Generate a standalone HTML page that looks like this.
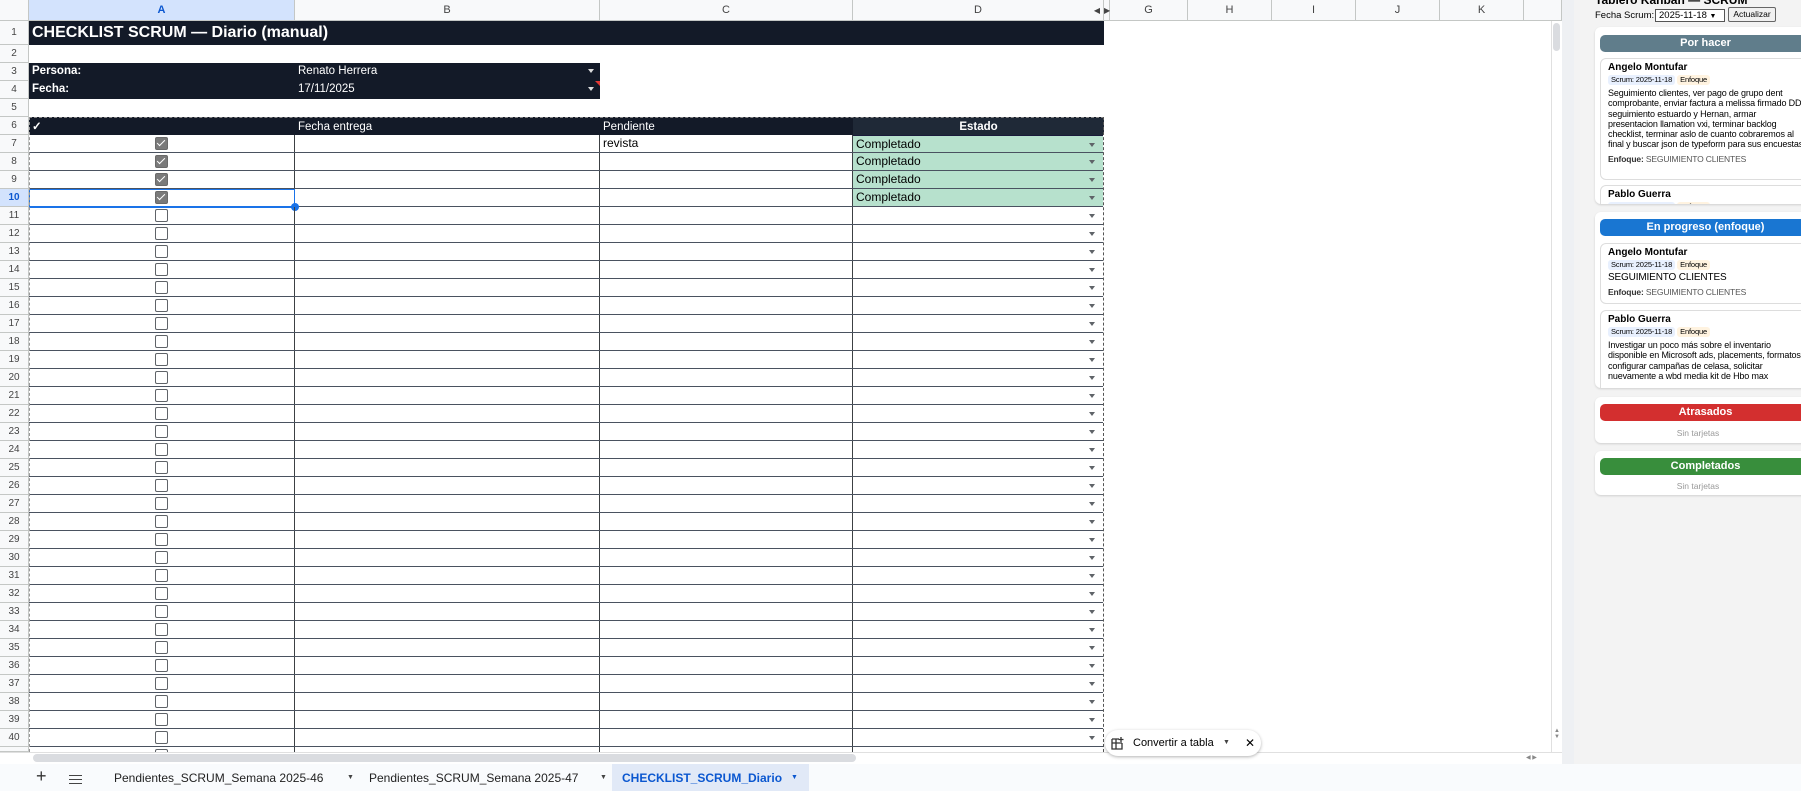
<!DOCTYPE html>
<html><head><meta charset="utf-8">
<style>
*{box-sizing:border-box;margin:0;padding:0}
body{width:1801px;height:791px;overflow:hidden;position:relative;background:#fff;font-family:"Liberation Sans",Arial,sans-serif;color:#000}
.a{position:absolute}
.ch{position:absolute;top:0;height:21px;background:#f8f9fa;border-right:1px solid #c4c7c5;border-bottom:1px solid #c4c7c5;font-size:11px;color:#444;text-align:center;line-height:21px}
.rn{position:absolute;left:0;width:29px;background:#f8f9fa;border-right:1px solid #c4c7c5;border-bottom:1px solid #c4c7c5;font-size:10px;color:#444;text-align:center}
.r{position:absolute;left:29px;width:1074px;height:18px;border-bottom:1px solid #4a5260}
.c{position:absolute;top:0;height:17px;font-size:12px;line-height:17px}
.vb{border-right:1px solid #3c4043}
.cb{position:absolute;left:126px;top:2px;width:13px;height:13px;border:1.5px solid #5f6368;border-radius:2px;background:#fff}
.cb.k{background:#7a7a7a;border-color:#6a6a6a}
.cb.k:after{content:"";position:absolute;left:3px;top:0px;width:3px;height:7px;border-right:1.6px solid #fff;border-bottom:1.6px solid #fff;transform:rotate(45deg)}
.dd{position:absolute;right:8px;top:7px;width:0;height:0;border-left:3px solid transparent;border-right:3px solid transparent;border-top:4px solid #5f6368}
.panel{position:absolute;left:1574px;top:0;width:227px;height:764px;background:#f3f3f3}
.box{position:absolute;left:1595px;width:216px;background:#fff;border-radius:6px;box-shadow:0 1px 2px rgba(0,0,0,.15);overflow:hidden}
.hd{position:absolute;left:5px;right:0;height:17px;border-radius:5px;color:#fff;font-weight:bold;font-size:11px;text-align:center;line-height:17px}
.card{position:absolute;left:5px;width:220px;border:1px solid #ddd;border-radius:6px;padding:3px 12px 0 7px;font-size:9px;line-height:10.3px;background:#fff;letter-spacing:-0.15px}
.nm{font-weight:bold;font-size:10px;line-height:12px;letter-spacing:0}
.chip{display:inline-block;font-size:7.5px;line-height:10px;padding:0 3px;border-radius:3px;margin:1px 2px 3px 0}
.c1{background:#e8f0fe}.c2{background:#fff3e0}
.ef{margin-top:4px;font-size:8.5px;color:#555}.ef b{color:#333}
.st{position:absolute;left:0;right:10px;text-align:center;font-size:8.5px;color:#999}
</style></head><body>

<div class="ch" style="left:0;width:29px;background:#f8f9fa"></div>
<div class="ch" style="left:29px;width:266px;background:#d3e3fd;font-weight:bold;color:#0b57d0">A</div>
<div class="ch" style="left:295px;width:305px">B</div>
<div class="ch" style="left:600px;width:253px">C</div>
<div class="ch" style="left:853px;width:251px">D<span style="position:absolute;right:3px;font-size:8px">◀</span></div>
<div class="ch" style="left:1104px;width:6px;font-size:8px;line-height:21px">▶</div>
<div class="ch" style="left:1110px;width:78px">G</div>
<div class="ch" style="left:1188px;width:84px">H</div>
<div class="ch" style="left:1272px;width:84px">I</div>
<div class="ch" style="left:1356px;width:84px">J</div>
<div class="ch" style="left:1440px;width:84px">K</div>
<div class="ch" style="left:1524px;width:38px"></div>

<div class="rn" style="top:21px;height:24px;line-height:24px">1</div>
<div class="rn" style="top:45px;height:18px;line-height:18px">2</div>
<div class="rn" style="top:63px;height:18px;line-height:18px">3</div>
<div class="rn" style="top:81px;height:18px;line-height:18px">4</div>
<div class="rn" style="top:99px;height:18px;line-height:18px">5</div>
<div class="rn" style="top:117px;height:18px;line-height:18px">6</div>
<div class="rn" style="top:135px;height:18px;line-height:18px">7</div>
<div class="rn" style="top:153px;height:18px;line-height:18px">8</div>
<div class="rn" style="top:171px;height:18px;line-height:18px">9</div>
<div class="rn" style="top:189px;height:18px;line-height:18px;background:#d3e3fd;font-weight:bold;color:#0b57d0">10</div>
<div class="rn" style="top:207px;height:18px;line-height:18px">11</div>
<div class="rn" style="top:225px;height:18px;line-height:18px">12</div>
<div class="rn" style="top:243px;height:18px;line-height:18px">13</div>
<div class="rn" style="top:261px;height:18px;line-height:18px">14</div>
<div class="rn" style="top:279px;height:18px;line-height:18px">15</div>
<div class="rn" style="top:297px;height:18px;line-height:18px">16</div>
<div class="rn" style="top:315px;height:18px;line-height:18px">17</div>
<div class="rn" style="top:333px;height:18px;line-height:18px">18</div>
<div class="rn" style="top:351px;height:18px;line-height:18px">19</div>
<div class="rn" style="top:369px;height:18px;line-height:18px">20</div>
<div class="rn" style="top:387px;height:18px;line-height:18px">21</div>
<div class="rn" style="top:405px;height:18px;line-height:18px">22</div>
<div class="rn" style="top:423px;height:18px;line-height:18px">23</div>
<div class="rn" style="top:441px;height:18px;line-height:18px">24</div>
<div class="rn" style="top:459px;height:18px;line-height:18px">25</div>
<div class="rn" style="top:477px;height:18px;line-height:18px">26</div>
<div class="rn" style="top:495px;height:18px;line-height:18px">27</div>
<div class="rn" style="top:513px;height:18px;line-height:18px">28</div>
<div class="rn" style="top:531px;height:18px;line-height:18px">29</div>
<div class="rn" style="top:549px;height:18px;line-height:18px">30</div>
<div class="rn" style="top:567px;height:18px;line-height:18px">31</div>
<div class="rn" style="top:585px;height:18px;line-height:18px">32</div>
<div class="rn" style="top:603px;height:18px;line-height:18px">33</div>
<div class="rn" style="top:621px;height:18px;line-height:18px">34</div>
<div class="rn" style="top:639px;height:18px;line-height:18px">35</div>
<div class="rn" style="top:657px;height:18px;line-height:18px">36</div>
<div class="rn" style="top:675px;height:18px;line-height:18px">37</div>
<div class="rn" style="top:693px;height:18px;line-height:18px">38</div>
<div class="rn" style="top:711px;height:18px;line-height:18px">39</div>
<div class="rn" style="top:729px;height:18px;line-height:18px">40</div>
<div class="rn" style="top:747px;height:5px"></div>

<div class="a" style="left:29px;top:21px;width:1075px;height:24px;background:#131a28;color:#fff;font-weight:bold;font-size:16px;line-height:24px;padding-left:3px">CHECKLIST SCRUM — Diario (manual)</div>
<div class="a" style="left:29px;top:63px;width:571px;height:36px;background:#131a28;color:#fff;font-size:11.5px">
 <div class="a" style="left:3px;top:2px;font-weight:bold">Persona:</div>
 <div class="a" style="left:269px;top:2px">Renato Herrera</div>
 <div class="a" style="left:3px;top:20px;font-weight:bold">Fecha:</div>
 <div class="a" style="left:269px;top:20px">17/11/2025</div>
 <div class="a" style="right:6px;top:6px;border-left:3px solid transparent;border-right:3px solid transparent;border-top:4px solid #ddd"></div>
 <div class="a" style="right:6px;top:24px;border-left:3px solid transparent;border-right:3px solid transparent;border-top:4px solid #ddd"></div>
 <div class="a" style="right:0;top:18px;border-left:5px solid transparent;border-top:5px solid #e53935"></div>
</div>
<div class="a" style="left:29px;top:117px;width:1075px;height:18px;background:#131a28;color:#fff;font-size:11.5px;line-height:18px;border-top:1px dashed #888">
 <span class="a" style="left:3px;font-weight:bold">✓</span>
 <span class="a" style="left:269px">Fecha entrega</span>
 <span class="a" style="left:574px">Pendiente</span>
 <div class="a" style="left:824px;top:0;width:251px;height:17px;background:#1f2937;text-align:center;font-weight:bold">Estado</div>
</div>

<div class="r" style="top:135px"><div class="c vb" style="left:0;width:266px"><div class="cb k"></div></div><div class="c vb" style="left:266px;width:305px"></div><div class="c vb" style="left:571px;width:253px;padding-left:3px">revista</div><div class="c" style="left:824px;width:250px;background:#b7e1cd;padding-left:3px;border-top:1px solid #1a1a3a">Completado<div class="dd"></div></div></div>
<div class="r" style="top:153px"><div class="c vb" style="left:0;width:266px"><div class="cb k"></div></div><div class="c vb" style="left:266px;width:305px"></div><div class="c vb" style="left:571px;width:253px"></div><div class="c" style="left:824px;width:250px;background:#b7e1cd;padding-left:3px">Completado<div class="dd"></div></div></div>
<div class="r" style="top:171px"><div class="c vb" style="left:0;width:266px"><div class="cb k"></div></div><div class="c vb" style="left:266px;width:305px"></div><div class="c vb" style="left:571px;width:253px"></div><div class="c" style="left:824px;width:250px;background:#b7e1cd;padding-left:3px">Completado<div class="dd"></div></div></div>
<div class="r" style="top:189px"><div class="c vb" style="left:0;width:266px"><div class="cb k"></div></div><div class="c vb" style="left:266px;width:305px"></div><div class="c vb" style="left:571px;width:253px"></div><div class="c" style="left:824px;width:250px;background:#b7e1cd;padding-left:3px">Completado<div class="dd"></div></div></div>
<div class="a" style="left:29px;top:189px;width:266px;height:19px;border:1.5px solid #1a73e8;border-bottom-width:2px"></div>
<div class="a" style="left:291px;top:203px;width:8px;height:8px;border-radius:50%;background:#1a73e8"></div>

<div class="r" style="top:207px"><div class="c vb" style="left:0;width:266px"><div class="cb"></div></div><div class="c vb" style="left:266px;width:305px"></div><div class="c vb" style="left:571px;width:253px"></div><div class="c" style="left:824px;width:250px"><div class="dd"></div></div></div>
<div class="r" style="top:225px"><div class="c vb" style="left:0;width:266px"><div class="cb"></div></div><div class="c vb" style="left:266px;width:305px"></div><div class="c vb" style="left:571px;width:253px"></div><div class="c" style="left:824px;width:250px"><div class="dd"></div></div></div>
<div class="r" style="top:243px"><div class="c vb" style="left:0;width:266px"><div class="cb"></div></div><div class="c vb" style="left:266px;width:305px"></div><div class="c vb" style="left:571px;width:253px"></div><div class="c" style="left:824px;width:250px"><div class="dd"></div></div></div>
<div class="r" style="top:261px"><div class="c vb" style="left:0;width:266px"><div class="cb"></div></div><div class="c vb" style="left:266px;width:305px"></div><div class="c vb" style="left:571px;width:253px"></div><div class="c" style="left:824px;width:250px"><div class="dd"></div></div></div>
<div class="r" style="top:279px"><div class="c vb" style="left:0;width:266px"><div class="cb"></div></div><div class="c vb" style="left:266px;width:305px"></div><div class="c vb" style="left:571px;width:253px"></div><div class="c" style="left:824px;width:250px"><div class="dd"></div></div></div>
<div class="r" style="top:297px"><div class="c vb" style="left:0;width:266px"><div class="cb"></div></div><div class="c vb" style="left:266px;width:305px"></div><div class="c vb" style="left:571px;width:253px"></div><div class="c" style="left:824px;width:250px"><div class="dd"></div></div></div>
<div class="r" style="top:315px"><div class="c vb" style="left:0;width:266px"><div class="cb"></div></div><div class="c vb" style="left:266px;width:305px"></div><div class="c vb" style="left:571px;width:253px"></div><div class="c" style="left:824px;width:250px"><div class="dd"></div></div></div>
<div class="r" style="top:333px"><div class="c vb" style="left:0;width:266px"><div class="cb"></div></div><div class="c vb" style="left:266px;width:305px"></div><div class="c vb" style="left:571px;width:253px"></div><div class="c" style="left:824px;width:250px"><div class="dd"></div></div></div>
<div class="r" style="top:351px"><div class="c vb" style="left:0;width:266px"><div class="cb"></div></div><div class="c vb" style="left:266px;width:305px"></div><div class="c vb" style="left:571px;width:253px"></div><div class="c" style="left:824px;width:250px"><div class="dd"></div></div></div>
<div class="r" style="top:369px"><div class="c vb" style="left:0;width:266px"><div class="cb"></div></div><div class="c vb" style="left:266px;width:305px"></div><div class="c vb" style="left:571px;width:253px"></div><div class="c" style="left:824px;width:250px"><div class="dd"></div></div></div>
<div class="r" style="top:387px"><div class="c vb" style="left:0;width:266px"><div class="cb"></div></div><div class="c vb" style="left:266px;width:305px"></div><div class="c vb" style="left:571px;width:253px"></div><div class="c" style="left:824px;width:250px"><div class="dd"></div></div></div>
<div class="r" style="top:405px"><div class="c vb" style="left:0;width:266px"><div class="cb"></div></div><div class="c vb" style="left:266px;width:305px"></div><div class="c vb" style="left:571px;width:253px"></div><div class="c" style="left:824px;width:250px"><div class="dd"></div></div></div>
<div class="r" style="top:423px"><div class="c vb" style="left:0;width:266px"><div class="cb"></div></div><div class="c vb" style="left:266px;width:305px"></div><div class="c vb" style="left:571px;width:253px"></div><div class="c" style="left:824px;width:250px"><div class="dd"></div></div></div>
<div class="r" style="top:441px"><div class="c vb" style="left:0;width:266px"><div class="cb"></div></div><div class="c vb" style="left:266px;width:305px"></div><div class="c vb" style="left:571px;width:253px"></div><div class="c" style="left:824px;width:250px"><div class="dd"></div></div></div>
<div class="r" style="top:459px"><div class="c vb" style="left:0;width:266px"><div class="cb"></div></div><div class="c vb" style="left:266px;width:305px"></div><div class="c vb" style="left:571px;width:253px"></div><div class="c" style="left:824px;width:250px"><div class="dd"></div></div></div>
<div class="r" style="top:477px"><div class="c vb" style="left:0;width:266px"><div class="cb"></div></div><div class="c vb" style="left:266px;width:305px"></div><div class="c vb" style="left:571px;width:253px"></div><div class="c" style="left:824px;width:250px"><div class="dd"></div></div></div>
<div class="r" style="top:495px"><div class="c vb" style="left:0;width:266px"><div class="cb"></div></div><div class="c vb" style="left:266px;width:305px"></div><div class="c vb" style="left:571px;width:253px"></div><div class="c" style="left:824px;width:250px"><div class="dd"></div></div></div>
<div class="r" style="top:513px"><div class="c vb" style="left:0;width:266px"><div class="cb"></div></div><div class="c vb" style="left:266px;width:305px"></div><div class="c vb" style="left:571px;width:253px"></div><div class="c" style="left:824px;width:250px"><div class="dd"></div></div></div>
<div class="r" style="top:531px"><div class="c vb" style="left:0;width:266px"><div class="cb"></div></div><div class="c vb" style="left:266px;width:305px"></div><div class="c vb" style="left:571px;width:253px"></div><div class="c" style="left:824px;width:250px"><div class="dd"></div></div></div>
<div class="r" style="top:549px"><div class="c vb" style="left:0;width:266px"><div class="cb"></div></div><div class="c vb" style="left:266px;width:305px"></div><div class="c vb" style="left:571px;width:253px"></div><div class="c" style="left:824px;width:250px"><div class="dd"></div></div></div>
<div class="r" style="top:567px"><div class="c vb" style="left:0;width:266px"><div class="cb"></div></div><div class="c vb" style="left:266px;width:305px"></div><div class="c vb" style="left:571px;width:253px"></div><div class="c" style="left:824px;width:250px"><div class="dd"></div></div></div>
<div class="r" style="top:585px"><div class="c vb" style="left:0;width:266px"><div class="cb"></div></div><div class="c vb" style="left:266px;width:305px"></div><div class="c vb" style="left:571px;width:253px"></div><div class="c" style="left:824px;width:250px"><div class="dd"></div></div></div>
<div class="r" style="top:603px"><div class="c vb" style="left:0;width:266px"><div class="cb"></div></div><div class="c vb" style="left:266px;width:305px"></div><div class="c vb" style="left:571px;width:253px"></div><div class="c" style="left:824px;width:250px"><div class="dd"></div></div></div>
<div class="r" style="top:621px"><div class="c vb" style="left:0;width:266px"><div class="cb"></div></div><div class="c vb" style="left:266px;width:305px"></div><div class="c vb" style="left:571px;width:253px"></div><div class="c" style="left:824px;width:250px"><div class="dd"></div></div></div>
<div class="r" style="top:639px"><div class="c vb" style="left:0;width:266px"><div class="cb"></div></div><div class="c vb" style="left:266px;width:305px"></div><div class="c vb" style="left:571px;width:253px"></div><div class="c" style="left:824px;width:250px"><div class="dd"></div></div></div>
<div class="r" style="top:657px"><div class="c vb" style="left:0;width:266px"><div class="cb"></div></div><div class="c vb" style="left:266px;width:305px"></div><div class="c vb" style="left:571px;width:253px"></div><div class="c" style="left:824px;width:250px"><div class="dd"></div></div></div>
<div class="r" style="top:675px"><div class="c vb" style="left:0;width:266px"><div class="cb"></div></div><div class="c vb" style="left:266px;width:305px"></div><div class="c vb" style="left:571px;width:253px"></div><div class="c" style="left:824px;width:250px"><div class="dd"></div></div></div>
<div class="r" style="top:693px"><div class="c vb" style="left:0;width:266px"><div class="cb"></div></div><div class="c vb" style="left:266px;width:305px"></div><div class="c vb" style="left:571px;width:253px"></div><div class="c" style="left:824px;width:250px"><div class="dd"></div></div></div>
<div class="r" style="top:711px"><div class="c vb" style="left:0;width:266px"><div class="cb"></div></div><div class="c vb" style="left:266px;width:305px"></div><div class="c vb" style="left:571px;width:253px"></div><div class="c" style="left:824px;width:250px"><div class="dd"></div></div></div>
<div class="r" style="top:729px"><div class="c vb" style="left:0;width:266px"><div class="cb"></div></div><div class="c vb" style="left:266px;width:305px"></div><div class="c vb" style="left:571px;width:253px"></div><div class="c" style="left:824px;width:250px"><div class="dd"></div></div></div>
<div class="r" style="top:747px;height:5px;border:0;overflow:hidden"><div class="c vb" style="left:0;width:266px;height:5px"><div class="cb"></div></div><div class="c vb" style="left:266px;width:305px;height:5px"></div><div class="c vb" style="left:571px;width:253px;height:5px"></div></div>

<div class="a" style="left:29px;top:117px;width:0;height:635px;border-left:1px dashed #999"></div>
<div class="a" style="left:1103px;top:117px;width:0;height:635px;border-left:1px dashed #555"></div>

<div class="a" style="left:1551px;top:21px;width:11px;height:731px;background:#fff;border-left:1px solid #e0e0e0"></div>
<div class="a" style="left:1553px;top:23px;width:7px;height:28px;border-radius:4px;background:#dadce0"></div>
<div class="a" style="left:1552px;top:728px;width:10px;font-size:6px;color:#888;text-align:center">▲<br>▼</div>

<div class="a" style="left:0;top:752px;width:1562px;height:12px;background:#fff;border-top:1px solid #e0e0e0"></div>
<div class="a" style="left:33px;top:754px;width:823px;height:8px;border-radius:4px;background:#dadce0"></div>
<div class="a" style="left:1526px;top:754px;font-size:6px;color:#888">◀ ▶</div>

<div class="a" style="left:1105px;top:730px;width:156px;height:26px;border-radius:13px;background:#fff;box-shadow:0 1px 3px rgba(0,0,0,.3);font-size:11px;line-height:26px">
 <svg class="a" style="left:6px;top:6px" width="14" height="14" viewBox="0 0 14 14" fill="none" stroke="#333" stroke-width="1.3"><path d="M1 3h7M1 3v10h10V7M1 7h10M5 3v10M10 1v5M7.5 3.5h5"/></svg>
 <span class="a" style="left:28px">Convertir a tabla</span>
 <span class="a" style="left:118px;font-size:7px;color:#444">▼</span>
 <span class="a" style="left:140px;font-size:12px">✕</span>
</div>

<div class="a" style="left:0;top:764px;width:1801px;height:27px;background:#f9fbfd"></div>
<div class="a" style="left:36px;top:766px;font-size:18px;color:#333">+</div>
<div class="a" style="left:69px;top:775px;width:13px;height:9px;border-top:1.5px solid #444;border-bottom:1.5px solid #444"><div style="margin-top:2.5px;border-top:1.5px solid #444"></div></div>
<div class="a" style="left:114px;top:771px;font-size:12px;color:#222">Pendientes_SCRUM_Semana 2025-46</div>
<div class="a" style="left:347px;top:774px;font-size:7px;color:#444">▼</div>
<div class="a" style="left:369px;top:771px;font-size:12px;color:#222">Pendientes_SCRUM_Semana 2025-47</div>
<div class="a" style="left:600px;top:774px;font-size:7px;color:#444">▼</div>
<div class="a" style="left:612px;top:764px;width:197px;height:27px;background:#e1e9f7"></div>
<div class="a" style="left:622px;top:771px;font-size:12px;color:#0b57d0;font-weight:bold">CHECKLIST_SCRUM_Diario</div>
<div class="a" style="left:791px;top:774px;font-size:7px;color:#0b57d0">▼</div>

<div class="a" style="left:1562px;top:0;width:12px;height:764px;background:#eef0f3"></div>
<div class="panel"></div>
<div class="a" style="left:1595px;top:-7px;font-size:12px;font-weight:bold">Tablero Kanban — SCRUM</div>
<div class="a" style="left:1595px;top:10px;font-size:9.5px;white-space:nowrap">Fecha Scrum:</div>
<div class="a" style="left:1655px;top:9px;width:70px;height:13px;border:1px solid #555;background:#fff;font-size:9.5px;line-height:11px;padding-left:3px;white-space:nowrap">2025-11-18 <span style="font-size:7px">▼</span></div>
<div class="a" style="left:1728px;top:7px;width:48px;height:15px;border:1px solid #666;border-radius:2px;background:#f0f0f0;font-size:8.5px;line-height:13px;text-align:center">Actualizar</div>

<div class="box" style="top:27px;height:177px">
 <div class="hd" style="top:8px;background:#607d8b">Por hacer</div>
 <div class="card" style="top:31px;height:122px">
  <div class="nm">Angelo Montufar</div>
  <span class="chip c1">Scrum: 2025-11-18</span><span class="chip c2">Enfoque</span>
  <div>Seguimiento clientes, ver pago de grupo dent comprobante, enviar factura a melissa firmado DD, seguimiento estuardo y Hernan, armar presentacion llamation vxi, terminar backlog checklist, terminar aslo de cuanto cobraremos al final y buscar json de typeform para sus encuestas,</div>
  <div class="ef"><b>Enfoque:</b> SEGUIMIENTO CLIENTES</div>
 </div>
 <div class="card" style="top:158px;height:40px">
  <div class="nm">Pablo Guerra</div>
  <span class="chip c1">Scrum: 2025-11-18</span><span class="chip c2">Enfoque</span>
 </div>
</div>

<div class="box" style="top:212px;height:176px">
 <div class="hd" style="top:7px;background:#1976d2">En progreso (enfoque)</div>
 <div class="card" style="top:31px;height:61px">
  <div class="nm">Angelo Montufar</div>
  <span class="chip c1">Scrum: 2025-11-18</span><span class="chip c2">Enfoque</span>
  <div style="font-size:10px">SEGUIMIENTO CLIENTES</div>
  <div class="ef"><b>Enfoque:</b> SEGUIMIENTO CLIENTES</div>
 </div>
 <div class="card" style="top:98px;height:90px">
  <div class="nm">Pablo Guerra</div>
  <span class="chip c1">Scrum: 2025-11-18</span><span class="chip c2">Enfoque</span>
  <div>Investigar un poco más sobre el inventario disponible en Microsoft ads, placements, formatos, configurar campañas de celasa, solicitar nuevamente a wbd media kit de Hbo max</div>
 </div>
</div>

<div class="box" style="top:397px;height:46px">
 <div class="hd" style="top:7px;background:#d32f2f">Atrasados</div>
 <div class="st" style="top:31px">Sin tarjetas</div>
</div>
<div class="box" style="top:451px;height:44px">
 <div class="hd" style="top:7px;background:#388e3c">Completados</div>
 <div class="st" style="top:30px">Sin tarjetas</div>
</div>

</body></html>
